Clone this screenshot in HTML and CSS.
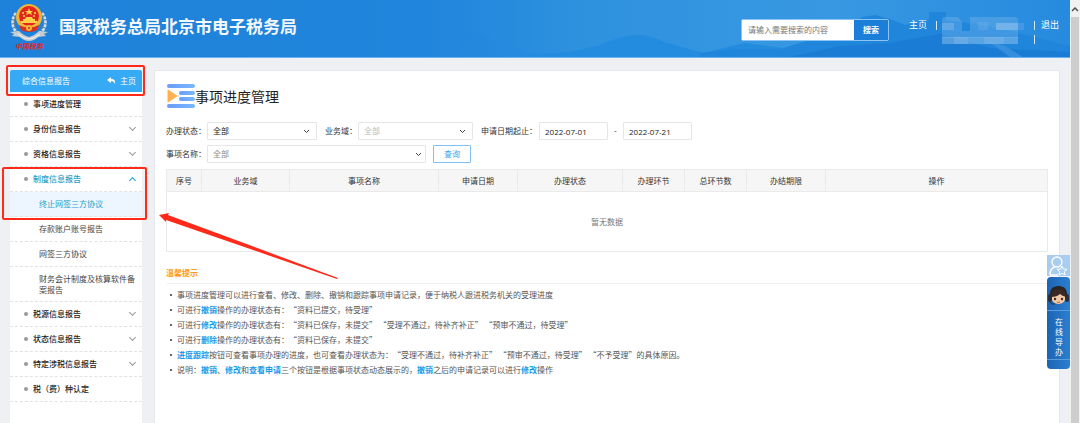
FILE: index.html
```html
<!DOCTYPE html>
<html lang="zh-CN">
<head>
    <meta charset="UTF-8">
    <meta name="viewport" content="width=device-width, initial-scale=1.0">
    <title>国家税务总局北京市电子税务局</title>
    <link rel="stylesheet" href="styles.css">
</head>
<body>

<div class="page">
    <header class="header">
        <svg class="header-bg" viewBox="0 0 1070 57" preserveAspectRatio="none" aria-hidden="true">
            <defs>
                <linearGradient id="sky" x1="0" y1="0" x2="1" y2="0">
                    <stop offset="0" stop-color="#1f82da"/>
                    <stop offset="0.4" stop-color="#2085dc"/>
                    <stop offset="0.55" stop-color="#2f92df"/>
                    <stop offset="0.78" stop-color="#3898e2"/>
                    <stop offset="1" stop-color="#268ade"/>
                </linearGradient>
            </defs>
            <rect width="1070" height="57" fill="url(#sky)"/>
            <path d="M470 33 Q500 42 530 53 L580 57 H450Z" fill="#2388dd" opacity=".3"/>
            <path d="M520 55 L570 52 L600 45 Q620 36 634 35 Q650 34 664 42 L703 53 L745 43 L800 50 V57 H520Z" fill="#238cdf"/>
            <path d="M700 53 Q740 48 780 49 L850 28 L862 17 L875 15 L890 19 L905 25 L929 19 V12 H946 V20 L975 24 L1010 31 L1070 46 V57 H700Z" fill="#2086db"/>
            <path d="M790 57 L840 46 L890 43 L940 34 L990 48 L1070 52 V57Z" fill="#1a7cd4"/>
            <path d="M988 41 L1005 46 L1023 57 H1010Z" fill="#4a9be4" opacity=".55"/>
        </svg>

        <svg class="emblem" viewBox="0 0 38 50" role="img" aria-label="中国税务">
            <path d="M6 10 Q0 19 5 27 Q10 34 17 35" fill="none" stroke="#d7dde2" stroke-width="3" stroke-dasharray="3 1"/>
            <path d="M32 10 Q38 19 33 27 Q28 34 21 35" fill="none" stroke="#d7dde2" stroke-width="3" stroke-dasharray="3 1"/>
            <path d="M7 10 Q2 19 6 26 M31 10 Q36 19 32 26" fill="none" stroke="#6d7b83" stroke-width="1"/>
            <path d="M0 29 L9 28 Q14 33 19 34 Q24 33 29 28 L38 29 L34 31 L36 33 L28 34 Q24 38 19 38 Q14 38 10 34 L2 33 L4 31Z" fill="#c6ccd0"/>
            <path d="M8 31 Q14 36 19 36 Q24 36 30 31" fill="none" stroke="#f5f7f8" stroke-width="1"/>
            <circle cx="19" cy="14" r="13" fill="#edb53a"/>
            <circle cx="19" cy="13" r="10" fill="#e3241f"/>
            <path d="M19 5 L20 8 H23 L21 9.500 L22 12 L19 10.500 L16 12 L17 9.500 L15 8 H18Z" fill="#ffd94c"/>
            <circle cx="13" cy="10" r="1" fill="#ffd94c"/>
            <circle cx="25" cy="10" r="1" fill="#ffd94c"/>
            <circle cx="14" cy="13" r="1" fill="#ffd94c"/>
            <circle cx="24" cy="13" r="1" fill="#ffd94c"/>
            <path d="M11 18 H13 V16 H15 L16 14 H22 L23 16 H25 V18 H27 V20 H11Z" fill="#ffd04a"/>
            <path d="M9 22 Q19 27 29 22 L27 27 Q19 31 11 27Z" fill="#dc2f22"/>
            <circle cx="19" cy="25" r="3" fill="#efb63b"/>
            <circle cx="19" cy="25" r="1" fill="#c63a20"/>
            <text x="19" y="46" text-anchor="middle" class="emblem-text">中国税务</text>
        </svg>
        <h1 class="site-name">国家税务总局北京市电子税务局</h1>

        <form class="search">
            <input type="text" class="search-input" placeholder="请输入需要搜索的内容" aria-label="搜索内容">
            <button type="button" class="search-btn">搜索</button>
        </form>

        <nav class="user-nav">
            <a href="#">主页</a>
            <span class="bar"></span>
            <svg class="masked" viewBox="0 0 84 28" aria-hidden="true">
                <g fill="#8fc1ee">
                    <path d="M0 3 Q0 0 3 0 H16 L20 5 V14 H0Z" opacity=".3"/>
                    <rect x="0" y="6" width="12" height="7" opacity=".4"/>
                    <path d="M28 0 H72 Q76 0 76 4 V14 H28Z" opacity=".3"/>
                    <rect x="36" y="5" width="10" height="8" opacity=".2"/>
                    <rect x="54" y="6" width="22" height="7" opacity=".6"/>
                    <rect x="76" y="6" width="6" height="7" opacity=".25"/>
                    <rect x="0" y="14" width="76" height="7" opacity=".3"/>
                    <rect x="0" y="20" width="76" height="7" opacity=".5"/>
                    <rect x="12" y="20" width="14" height="7" opacity=".3"/>
                    <rect x="42" y="20" width="20" height="7" opacity=".3"/>
                </g>
            </svg>
            <span class="bars">
                <span class="bar"></span>
                <span class="bar"></span>
            </span>
            <a href="#">退出</a>
        </nav>
    </header>

    <div class="layout">
        <aside class="sidebar">
            <div class="side-head">
                <span>综合信息报告</span>
                <a href="#" class="side-home">
                    <svg width="9" height="8" viewBox="0 0 9 8" aria-hidden="true">
                        <path d="M4 0 L0 3 L4 6 V4 Q7 4 8 7 Q9 2 4 2Z" fill="#fff"/>
                    </svg>
                    主页
                </a>
                <div class="mark mark-head"></div>
            </div>
            <ul class="menu">
                <li><a href="#" class="item">事项进度管理</a></li>
                <li><a href="#" class="item">身份信息报告<i class="chev"></i></a></li>
                <li><a href="#" class="item">资格信息报告<i class="chev"></i></a></li>
                <li class="open">
                    <a href="#" class="item active">制度信息报告<i class="chev up"></i></a>
                    <ul class="submenu">
                        <li><a href="#" class="sub current">终止网签三方协议</a></li>
                        <li><a href="#" class="sub">存款账户账号报告</a></li>
                        <li><a href="#" class="sub">网签三方协议</a></li>
                        <li><a href="#" class="sub">财务会计制度及核算软件备案报告</a></li>
                    </ul>
                    <div class="mark mark-menu"></div>
                </li>
                <li><a href="#" class="item">税源信息报告<i class="chev"></i></a></li>
                <li><a href="#" class="item">状态信息报告<i class="chev"></i></a></li>
                <li><a href="#" class="item">特定涉税信息报告<i class="chev"></i></a></li>
                <li><a href="#" class="item">税（费）种认定</a></li>
            </ul>
        </aside>

        <main class="content">
            <h2 class="title">
                <svg width="29" height="24" viewBox="0 0 29 24" aria-hidden="true">
                    <defs>
                        <linearGradient id="lines" x1="0" y1="0" x2="1" y2="0">
                            <stop offset="0" stop-color="#6c9bff"/>
                            <stop offset="1" stop-color="#78b8fb"/>
                        </linearGradient>
                    </defs>
                    <g fill="url(#lines)">
                        <rect x="1" y="0" width="28" height="4" rx="2"/>
                        <rect x="13" y="7" width="16" height="4" rx="2"/>
                        <rect x="13" y="13" width="16" height="4" rx="2"/>
                        <rect x="1" y="20" width="28" height="4" rx="2"/>
                    </g>
                    <path d="M2 6 L11 12 L2 18Z" fill="#ffb04f" stroke="#ffb04f" stroke-linejoin="round"/>
                </svg>
                事项进度管理
            </h2>

            <form class="filters">
                <div class="filter-row">
                    <label for="status">办理状态：</label>
                    <select id="status" class="field w-status"><option>全部</option></select>
                    <label for="domain" class="next">业务域：</label>
                    <select id="domain" class="field w-domain faint"><option>全部</option></select>
                    <label for="date-from" class="next date-label">申请日期起止：</label>
                    <input type="text" id="date-from" class="field w-date" value="2022-07-01">
                    <span class="dash">-</span>
                    <input type="text" class="field w-date" value="2022-07-21" aria-label="申请日期止">
                </div>
                <div class="filter-row">
                    <label for="matter">事项名称：</label>
                    <select id="matter" class="field w-matter muted"><option>全部</option></select>
                    <button type="button" class="query">查询</button>
                </div>
            </form>

            <table class="grid">
                <colgroup>
                    <col class="col-no"><col class="col-domain"><col class="col-name"><col class="col-date"><col class="col-status">
                    <col class="col-step"><col class="col-step"><col class="col-date"><col>
                </colgroup>
                <thead>
                    <tr>
                        <th>序号</th>
                        <th>业务域</th>
                        <th>事项名称</th>
                        <th>申请日期</th>
                        <th>办理状态</th>
                        <th>办理环节</th>
                        <th>总环节数</th>
                        <th>办结期限</th>
                        <th>操作</th>
                    </tr>
                </thead>
                <tbody>
                    <tr><td colspan="9">暂无数据</td></tr>
                </tbody>
            </table>

            <section class="tips">
                <h3>温馨提示</h3>
                <ul>
                    <li>事项进度管理可以进行查看、修改、删除、撤销和跟踪事项申请记录，便于纳税人跟进税务机关的受理进度</li>
                    <li>可进行<b>撤销</b>操作的办理状态有：“资料已提交，待受理”</li>
                    <li>可进行<b>修改</b>操作的办理状态有：“资料已保存，未提交” “受理不通过，待补齐补正” “预审不通过，待受理”</li>
                    <li>可进行<b>删除</b>操作的办理状态有：“资料已保存，未提交”</li>
                    <li><b>进度跟踪</b>按钮可查看事项办理的进度，也可查看办理状态为：“受理不通过，待补齐补正” “预审不通过，待受理” “不予受理”的具体原因。</li>
                    <li>说明：<b>撤销</b>、<b>修改</b>和<b>查看申请</b>三个按钮是根据事项状态动态展示的，<b>撤销</b>之后的申请记录可以进行<b>修改</b>操作</li>
                </ul>
            </section>

            <svg class="arrow" width="180" height="66" viewBox="0 0 180 66" aria-hidden="true">
                <path d="M0 2 L10 0 L9 2 L179 65 L178 66 L7 7 L7 9Z" fill="#ff2a1a"/>
            </svg>
        </main>
    </div>

    <div class="float">
        <a href="#" class="float-user" aria-label="我的">
            <svg width="19" height="20" viewBox="0 0 19 20" fill="none" stroke="#fff" stroke-width="1.300" aria-hidden="true">
                <circle cx="8" cy="6" r="5"/>
                <path d="M1 19 Q1 12 6 11 M1 19 H9"/>
                <path d="M13 10 L14.300 13 L18 13.300 L15.300 15.500 L16 19 L13 17.300 L10 19 L10.700 15.500 L8 13.300 L11.700 13Z" fill="#a9cdf0" stroke-width="1"/>
            </svg>
        </a>
        <a href="#" class="float-guide">
            <svg width="23" height="22" viewBox="0 0 23 22" aria-hidden="true">
                <path d="M3 12 Q2 1 11.500 1 Q21 1 20 12" fill="#2b2422"/>
                <ellipse cx="11.500" cy="13" rx="7" ry="6" fill="#f3c8a4"/>
                <path d="M4 12 Q4 4 11.500 4 Q19 4 19 12 Q15 11 13 9 Q10 12 4 12Z" fill="#3a2a24"/>
                <rect x="1" y="9" width="4" height="8" rx="2" fill="#25303d"/>
                <rect x="18" y="9" width="4" height="8" rx="2" fill="#25303d"/>
                <circle cx="8" cy="14" r="1.200" fill="#4a2c1d"/>
                <circle cx="15" cy="14" r="1.200" fill="#4a2c1d"/>
                <path d="M10 17 Q11.500 18 13 17" fill="none" stroke="#c4553d"/>
                <path d="M3 17 Q4 20 8 19" fill="none" stroke="#25303d"/>
            </svg>
            <span class="guide-text">在线导办</span>
        </a>
    </div>
</div>

<div class="scrollbar">
    <svg width="8" height="5" viewBox="0 0 8 5" aria-hidden="true">
        <path d="M1 4 L4 1 L7 4" fill="none" stroke="#505050" stroke-width="1.500"/>
    </svg>
    <div class="thumb"></div>
</div>

</body>
</html>
```
FILE: styles.css
```css
* {
    box-sizing: border-box;
}
body {
    display: flex;
    min-height: 100vh;
    margin: 0;
    background-color: #eff0f4;
    color: #333;
    font-family: "Noto Sans CJK SC", sans-serif;
    font-size: 8px;
    line-height: 12px;
}
a {
    color: inherit;
    text-decoration: none;
}
ul {
    margin: 0;
    padding: 0;
    list-style: none;
}
input, select, button {
    font: inherit;
    outline: none;
}
.page {
    position: relative;
    flex: 1;
    display: flex;
    flex-direction: column;
    min-width: 0;
}

/* header */
.header {
    position: relative;
    display: flex;
    align-items: flex-start;
    height: 58px;
    padding: 3px 11px 0 10px;
    border-bottom: 1px solid #6cb2f0;
    color: #fff;
}
.header-bg {
    position: absolute;
    top: 0;
    left: 0;
    width: 100%;
    height: 57px;
    z-index: -1;
}
.emblem {
    width: 38px;
    height: 50px;
}
.emblem-text {
    fill: #e3241f;
    font-family: "Noto Sans CJK SC", sans-serif;
    font-size: 7px;
    font-style: italic;
    font-weight: bold;
}
.site-name {
    margin: 11px 0 0 11px;
    color: #f3f8fd;
    font-size: 17px;
    line-height: 24px;
    font-weight: bold;
    white-space: nowrap;
}
.search {
    display: flex;
    width: 148px;
    height: 22px;
    margin: 16px 20px 0 auto;
    border: 1px solid #8cc5f5;
    border-radius: 2px;
}
.search-input {
    flex: 1;
    min-width: 0;
    padding: 0 6px;
    border: 0;
    background-color: #fff;
}
.search-input::placeholder {
    color: #777;
}
.search-btn {
    width: 34px;
    padding: 0;
    border: 0;
    background-color: #1b7fd9;
    color: #fff;
    font-weight: bold;
}
.user-nav {
    display: flex;
    margin-top: 14px;
    font-size: 9px;
    line-height: 16px;
    white-space: nowrap;
}
.bar {
    display: block;
    width: 1px;
    height: 9px;
    margin: 4px 5px 0 9px;
    background-color: #d5e8fa;
}
.bars .bar {
    margin: 4px 6px 5px 8px;
}
.masked {
    width: 84px;
    height: 28px;
}

/* sidebar */
.layout {
    flex: 1;
    display: flex;
    gap: 12px;
    padding: 12px 10px 0;
}
.sidebar {
    width: 132px;
    background-color: #fff;
}
.side-head {
    position: relative;
    display: flex;
    align-items: center;
    justify-content: space-between;
    height: 22px;
    padding: 0 6px 0 12px;
    border-radius: 2px 2px 0 0;
    background-color: #36aaf4;
    color: #fff;
}
.side-home {
    display: flex;
    align-items: center;
    gap: 4px;
}
.menu a {
    display: block;
    border-bottom: 1px dashed #e2e2e2;
}
.item {
    position: relative;
    padding: 6px 20px 6px 23px;
    color: #222;
    font-weight: 500;
}
.item::before {
    content: "";
    position: absolute;
    left: 14px;
    top: 10px;
    width: 4px;
    height: 4px;
    border-radius: 50%;
    background-color: #999;
}
.item.active {
    color: #1a9fc9;
}
.chev {
    position: absolute;
    right: 7px;
    top: 8px;
    width: 5px;
    height: 5px;
    border: solid #999;
    border-width: 0 1px 1px 0;
    transform: rotate(45deg);
}
.chev.up {
    top: 11px;
    border-color: #1a9fc9;
    transform: rotate(225deg);
}
.sub {
    padding: 6px 4px 6px 29px;
    color: #444;
    line-height: 12px;
}
.submenu li:last-child .sub {
    line-height: 11px;
}
.sub.current {
    background-color: #edf6fe;
    color: #1a9fc9;
}
.open {
    position: relative;
}

/* red highlight boxes */
.mark {
    position: absolute;
    border: 2px solid #ff2a1a;
    border-radius: 2px;
    z-index: 2;
    pointer-events: none;
}
.mark-head {
    inset: -5px -3px -4px -4px;
}
.mark-menu {
    top: 0;
    left: -8px;
    right: -5px;
    height: 53px;
}
.arrow {
    position: absolute;
    left: 4px;
    top: 142px;
}

/* content */
.content {
    position: relative;
    flex: 1;
    min-width: 0;
    padding: 13px 11px 0;
    border: 1px solid #e6e7ea;
    border-bottom: 0;
    background-color: #fff;
}
.title {
    display: flex;
    align-items: center;
    margin: 0 0 14px;
    color: #222;
    font-size: 14px;
    line-height: 24px;
    font-weight: 400;
}
.filter-row {
    display: flex;
    align-items: center;
    margin-bottom: 5px;
    white-space: nowrap;
}
.filter-row label {
    min-width: 41px;
}
.filter-row label.next {
    min-width: 33px;
    margin-left: 8px;
}
.filter-row label.date-label {
    min-width: 58px;
}
.field {
    height: 18px;
    padding: 0 5px;
    border: 1px solid #e6e6e6;
    border-radius: 1px;
    background-color: #fff;
    color: #222;
}
select.field {
    appearance: none;
    background-image: url("data:image/svg+xml,%3Csvg xmlns='http://www.w3.org/2000/svg' viewBox='0 0 7 5'%3E%3Cpath d='M1 1 L3.5 3.5 L6 1' fill='none' stroke='%23444'/%3E%3C/svg%3E");
    background-repeat: no-repeat;
    background-position: right 6px center;
    background-size: 7px 5px;
}
select.faint {
    color: #bbb;
}
select.muted {
    color: #888;
    background-position: right 3px center;
}
.w-status {
    width: 110px;
}
.w-domain {
    width: 115px;
}
.w-date {
    width: 69px;
    font-family: "Open Sans", sans-serif;
}
.w-matter {
    width: 219px;
}
.dash {
    width: 15px;
    text-align: center;
}
.query {
    width: 38px;
    height: 18px;
    margin-left: 7px;
    padding: 0;
    border: 1px solid #7fc0f5;
    border-radius: 1px;
    background-color: #fff;
    color: #3a9df0;
}

.grid {
    width: 100%;
    margin-top: 6px;
    table-layout: fixed;
    border-collapse: collapse;
    border: 1px solid #eaeaea;
}
.grid th {
    height: 22px;
    padding: 0;
    border: 1px solid #eaeaea;
    background-color: #f6f6f6;
    font-weight: 400;
}
.grid td {
    height: 60px;
    padding: 0;
    color: #777;
    text-align: center;
}
.col-no { width: 35px; }
.col-domain { width: 88px; }
.col-name { width: 149px; }
.col-date { width: 79px; }
.col-status { width: 105px; }
.col-step { width: 62px; }

.filters .filter-row:last-child {
    margin-bottom: 0;
}
.tips {
    margin-top: 15px;
    color: #555;
    text-spacing-trim: space-all;
}
.tips h3 {
    margin: 0 0 3px;
    padding-bottom: 4px;
    border-bottom: 1px solid #f2f2f2;
    color: #ff9a1a;
    font-size: 8px;
    line-height: 12px;
}
.tips li {
    position: relative;
    padding-left: 11px;
    line-height: 15px;
}
.tips li::before {
    content: "";
    position: absolute;
    left: 4px;
    top: 7px;
    width: 2px;
    height: 2px;
    background-color: #666;
}
.tips b {
    color: #1a9bea;
}

/* floating service buttons */
.float {
    position: absolute;
    top: 255px;
    right: 0;
    width: 23px;
    z-index: 3;
}
.float-user {
    display: flex;
    align-items: center;
    justify-content: center;
    height: 21px;
    margin-bottom: 1px;
    background-color: #a9cdf0;
}
.float-guide {
    display: flex;
    flex-direction: column;
    align-items: center;
    height: 92px;
    padding-top: 8px;
    border-radius: 4px;
    background: linear-gradient(90deg, #1d63b4, #2b7fd0);
    color: #fff;
}
.guide-text {
    width: 100%;
    margin-top: 3px;
    padding: 6px 7px 2px 8px;
    border: solid #5c9bdc;
    border-width: 1px 0;
    line-height: 10px;
}

/* scrollbar */
.scrollbar {
    display: flex;
    flex-direction: column;
    align-items: center;
    gap: 5px;
    width: 10px;
    padding-top: 7px;
    background-color: #f1f1f1;
}
.thumb {
    flex: 1;
    width: 8px;
    background-color: #cdcdcd;
}
```
